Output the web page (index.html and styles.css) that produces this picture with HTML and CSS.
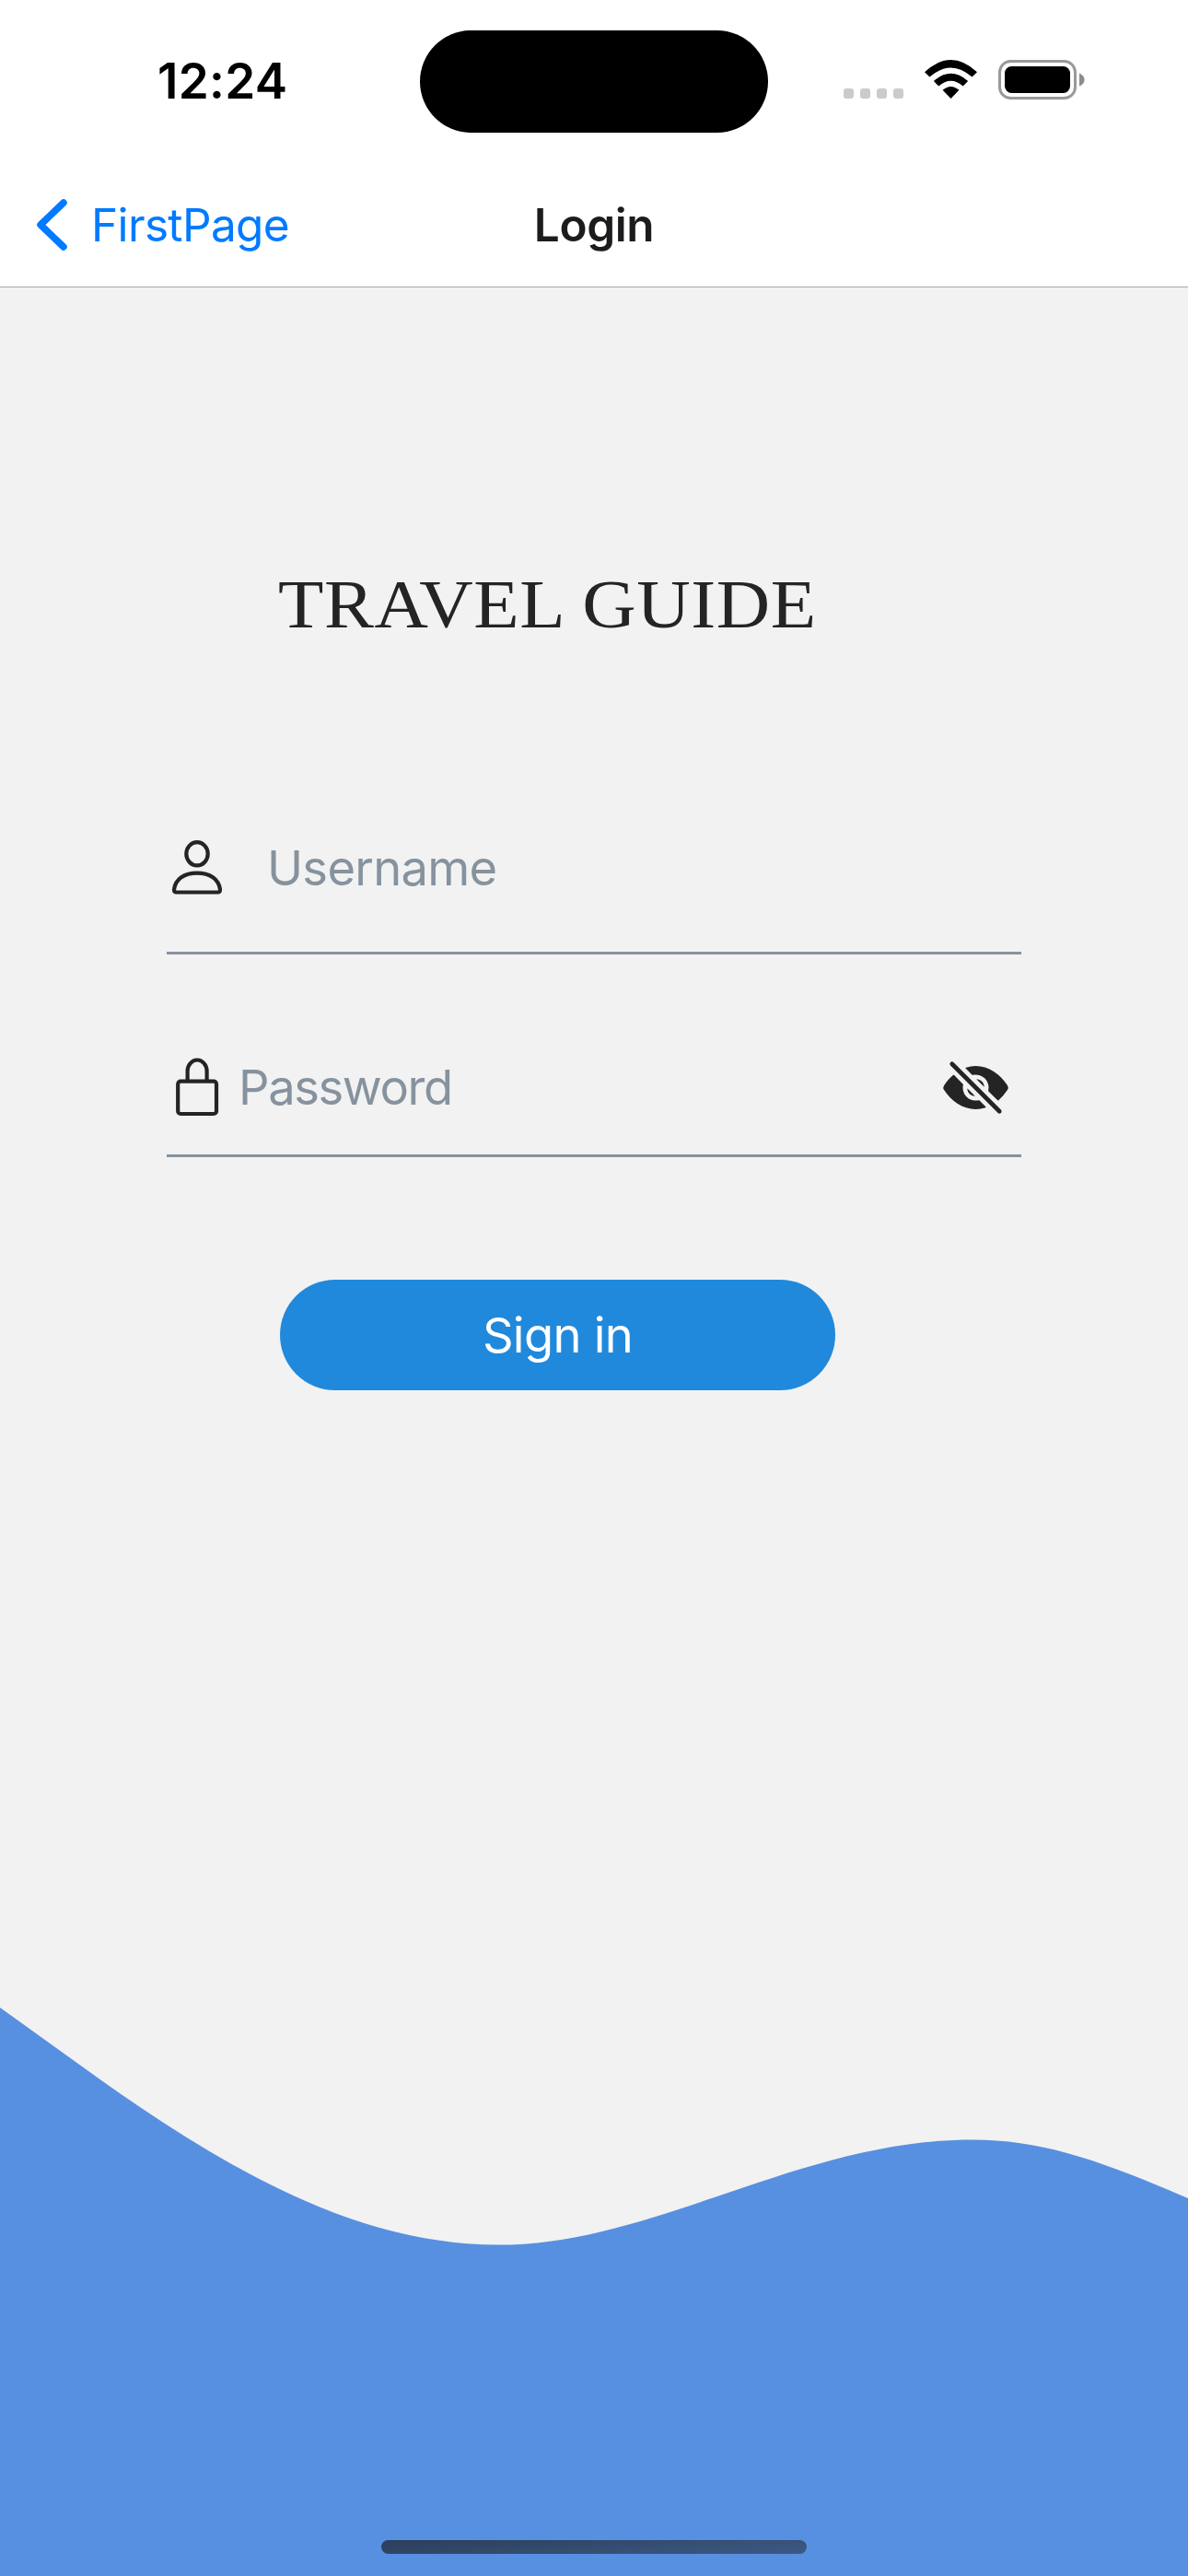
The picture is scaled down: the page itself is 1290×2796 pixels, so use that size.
FILE: index.html
```html
<!DOCTYPE html>
<html lang="en">
<head>
<meta charset="utf-8">
<title>Login</title>
<link rel="stylesheet" href="styles.css">
</head>
<body>
<div class="screen">
  <header class="top">
    <div class="status">
      <span class="time">12:24</span>
      <div class="island"></div>
      <div class="indicators">
        <div class="dots"><i></i><i></i><i></i><i></i></div>
        <svg class="wifi" viewBox="0 0 57 42">
          <path d="M0 13.2Q28.500 -13.200 57 13.200L51.500 18.600Q28.500 -1.800 5.500 18.600Z"/>
          <path d="M9.900 23Q28.500 6.600 47.100 23L41.700 28.500Q28.500 17.200 15.300 28.500Z"/>
          <path d="M19.600 32.800Q28.500 25.200 37.400 32.800L28.500 42Z"/>
        </svg>
        <svg class="battery" viewBox="0 0 94 43">
          <rect x="1.500" y="1.500" width="82" height="40" rx="12" fill="none" stroke="#999" stroke-width="3"/>
          <rect x="7" y="7" width="71" height="29" rx="7.500"/>
          <path d="M88 14.500Q93.600 17 93.600 21.500T88 28.500Z" fill="#8c8c8c"/>
        </svg>
      </div>
    </div>
    <nav class="nav">
      <a class="back">
        <svg class="chevron" viewBox="0 0 34 58"><path d="M30 5L5 29L30 53"/></svg>
        <span class="back-label">FirstPage</span>
      </a>
      <span class="title">Login</span>
    </nav>
  </header>
  <main class="content">
    <h1 class="brand">TRAVEL GUIDE</h1>
    <div class="field field-user">
      <svg class="icon" viewBox="0 0 60 66">
        <ellipse cx="30" cy="18.800" rx="11.700" ry="12.600"/>
        <path d="M7.500 60.500H52.500Q55 60.500 55 57.500C53.500 46 44 39.600 30 39.600S6.500 46 5 57.500Q5 60.500 7.500 60.500Z"/>
      </svg>
      <span class="placeholder user-label">Username</span>
    </div>
    <div class="field field-pass">
      <svg class="icon lock" viewBox="0 0 60 66">
        <rect x="9.200" y="25.600" width="41.800" height="35.400" rx="3"/>
        <path d="M19.600 25V14.500A10.500 12 0 0 1 40.600 14.500V25"/>
      </svg>
      <span class="placeholder pass-label">Password</span>
      <svg class="eye" viewBox="0 0 512 512">
        <path d="M432 448a15.920 15.920 0 01-11.310-4.690l-352-352a16 16 0 0122.620-22.620l352 352A16 16 0 01432 448zM248 315.850l-51.790-51.790a2 2 0 00-3.390 1.690 64.110 64.110 0 0053.490 53.490 2 2 0 001.690-3.390zM264 196.150L315.870 248a2 2 0 003.400-1.690 64.130 64.130 0 00-53.550-53.550 2 2 0 00-1.720 3.390z"/>
        <path d="M491 273.360a32.200 32.200 0 00-.1-34.760c-26.460-40.920-60.790-75.680-99.270-100.530C349 110.550 302 96 255.680 96a226.540 226.540 0 00-71.820 11.790 4 4 0 00-1.560 6.630l47.240 47.240a4 4 0 003.820 1.050 96 96 0 01116 116 4 4 0 001.050 3.810l67.950 68a4 4 0 005.400.24 343.810 343.810 0 0067.240-77.400zM256 352a96 96 0 01-93.300-118.630 4 4 0 00-1.050-3.810l-66.840-66.870a4 4 0 00-5.410-.23c-24.390 20.810-47 46.130-67.670 75.720a31.920 31.920 0 00-.64 35.540c26.410 41.330 60.390 76.140 98.280 100.650C162.060 402 207.920 416 255.680 416a238.220 238.220 0 0072.640-11.550 4 4 0 001.610-6.640l-47.470-47.460a4 4 0 00-3.810-1.050A96 96 0 01256 352z"/>
      </svg>
    </div>
    <button class="signin">Sign in</button>
  </main>
  <footer class="wave-area">
    <svg class="wave" viewBox="0 2170 1290 626">
      <path d="M0 2179L110 2258C250 2357 390 2436.600 541 2436.600C711 2436.600 868 2322.400 1056 2322.400C1132 2322.400 1195 2345 1290 2386V2796H0Z"/>
    </svg>
    <div class="home"></div>
  </footer>
</div>
</body>
</html>
```
FILE: styles.css
```css
* { box-sizing: border-box; }
body { margin: 0; font-family: Inter, "Liberation Sans", sans-serif; }
svg { display: block; flex: none; }
.screen {
  width: 1290px;
  height: 2796px;
  display: flex;
  flex-direction: column;
  background: #f2f2f2;
  overflow: hidden;
}
.top { height: 312px; background: #fff; border-bottom: 1px solid #a9a9a9; }
.status {
  height: 178px;
  display: grid;
  grid-template-columns: 456px 378px 456px;
  align-items: start;
}
.time {
  padding: 56px 0 0 171px;
  font-size: 53px;
  line-height: 64px;
  font-weight: 600;
  letter-spacing: 0.3px;
  white-space: nowrap;
}
.island { height: 111px; margin-top: 33px; border-radius: 56px; background: #000; }
.indicators { display: flex; align-items: flex-start; padding: 65px 0 0 82px; }
.dots { display: flex; gap: 7px; margin: 31px 23px 0 0; }
.dots i { width: 11px; height: 11px; border-radius: 3px; background: #cbcbcb; }
.wifi { width: 57px; height: 42px; margin-right: 23px; }
.battery { width: 94px; height: 43px; }
.nav {
  height: 132px;
  display: grid;
  grid-template-columns: 1fr auto 1fr;
  align-items: center;
}
.back { display: flex; align-items: center; padding-left: 39px; color: #007aff; }
.chevron { width: 34px; height: 58px; }
.chevron path { fill: none; stroke: #007aff; stroke-width: 7.5; stroke-linecap: round; stroke-linejoin: round; }
.back-label { margin-left: 26px; font-size: 49.5px; line-height: 60px; letter-spacing: -0.65px; }
.title { font-size: 49.5px; line-height: 60px; font-weight: 600; letter-spacing: -0.4px; color: #1c1c1e; }
.content { display: flex; flex-direction: column; align-items: flex-start; padding-top: 299px; }
.brand {
  margin: 0 0 0 302px;
  height: 90px;
  font-family: "Liberation Serif", serif;
  font-size: 75px;
  line-height: 90px;
  font-weight: 400;
  letter-spacing: 0.6px;
  color: #242424;
  white-space: nowrap;
  transform: scaleX(1.078);
  transform-origin: left center;
}
.field {
  width: 928px;
  margin-left: 181px;
  display: flex;
  align-items: flex-start;
  border-bottom: 3px solid #86939e;
}
.field-user { margin-top: 207px; height: 128px; }
.field-pass { margin-top: 107px; height: 113px; }
.icon { width: 60px; height: 66px; margin-left: 3px; fill: none; stroke: #242424; stroke-width: 4.2; stroke-linejoin: round; }
.lock { margin-top: 5px; }
.placeholder { font-size: 52.5px; line-height: 64px; letter-spacing: -0.7px; color: #86939e; }
.user-label { margin: 2px 0 0 46px; }
.pass-label { margin: 5px 0 0 15px; letter-spacing: -1.4px; }
.eye { width: 75px; height: 75px; margin: 0 12px 0 auto; fill: #242424; }
.signin {
  width: 603px;
  height: 120px;
  margin: 133px 0 0 304px;
  padding: 0 0 1px;
  border: 0;
  border-radius: 60px;
  background: #2089dc;
  color: #fff;
  font: 400 52.5px/64px Inter, "Liberation Sans", sans-serif;
  letter-spacing: -0.7px;
}
.wave-area { position: relative; margin-top: auto; }
.wave { width: 1290px; height: 626px; fill: #5890e1; }
.home {
  position: absolute;
  left: 414px;
  bottom: 24px;
  width: 462px;
  height: 15px;
  border-radius: 8px;
  background: linear-gradient(175deg, #2c3e5a, #3c5a86);
}
```
